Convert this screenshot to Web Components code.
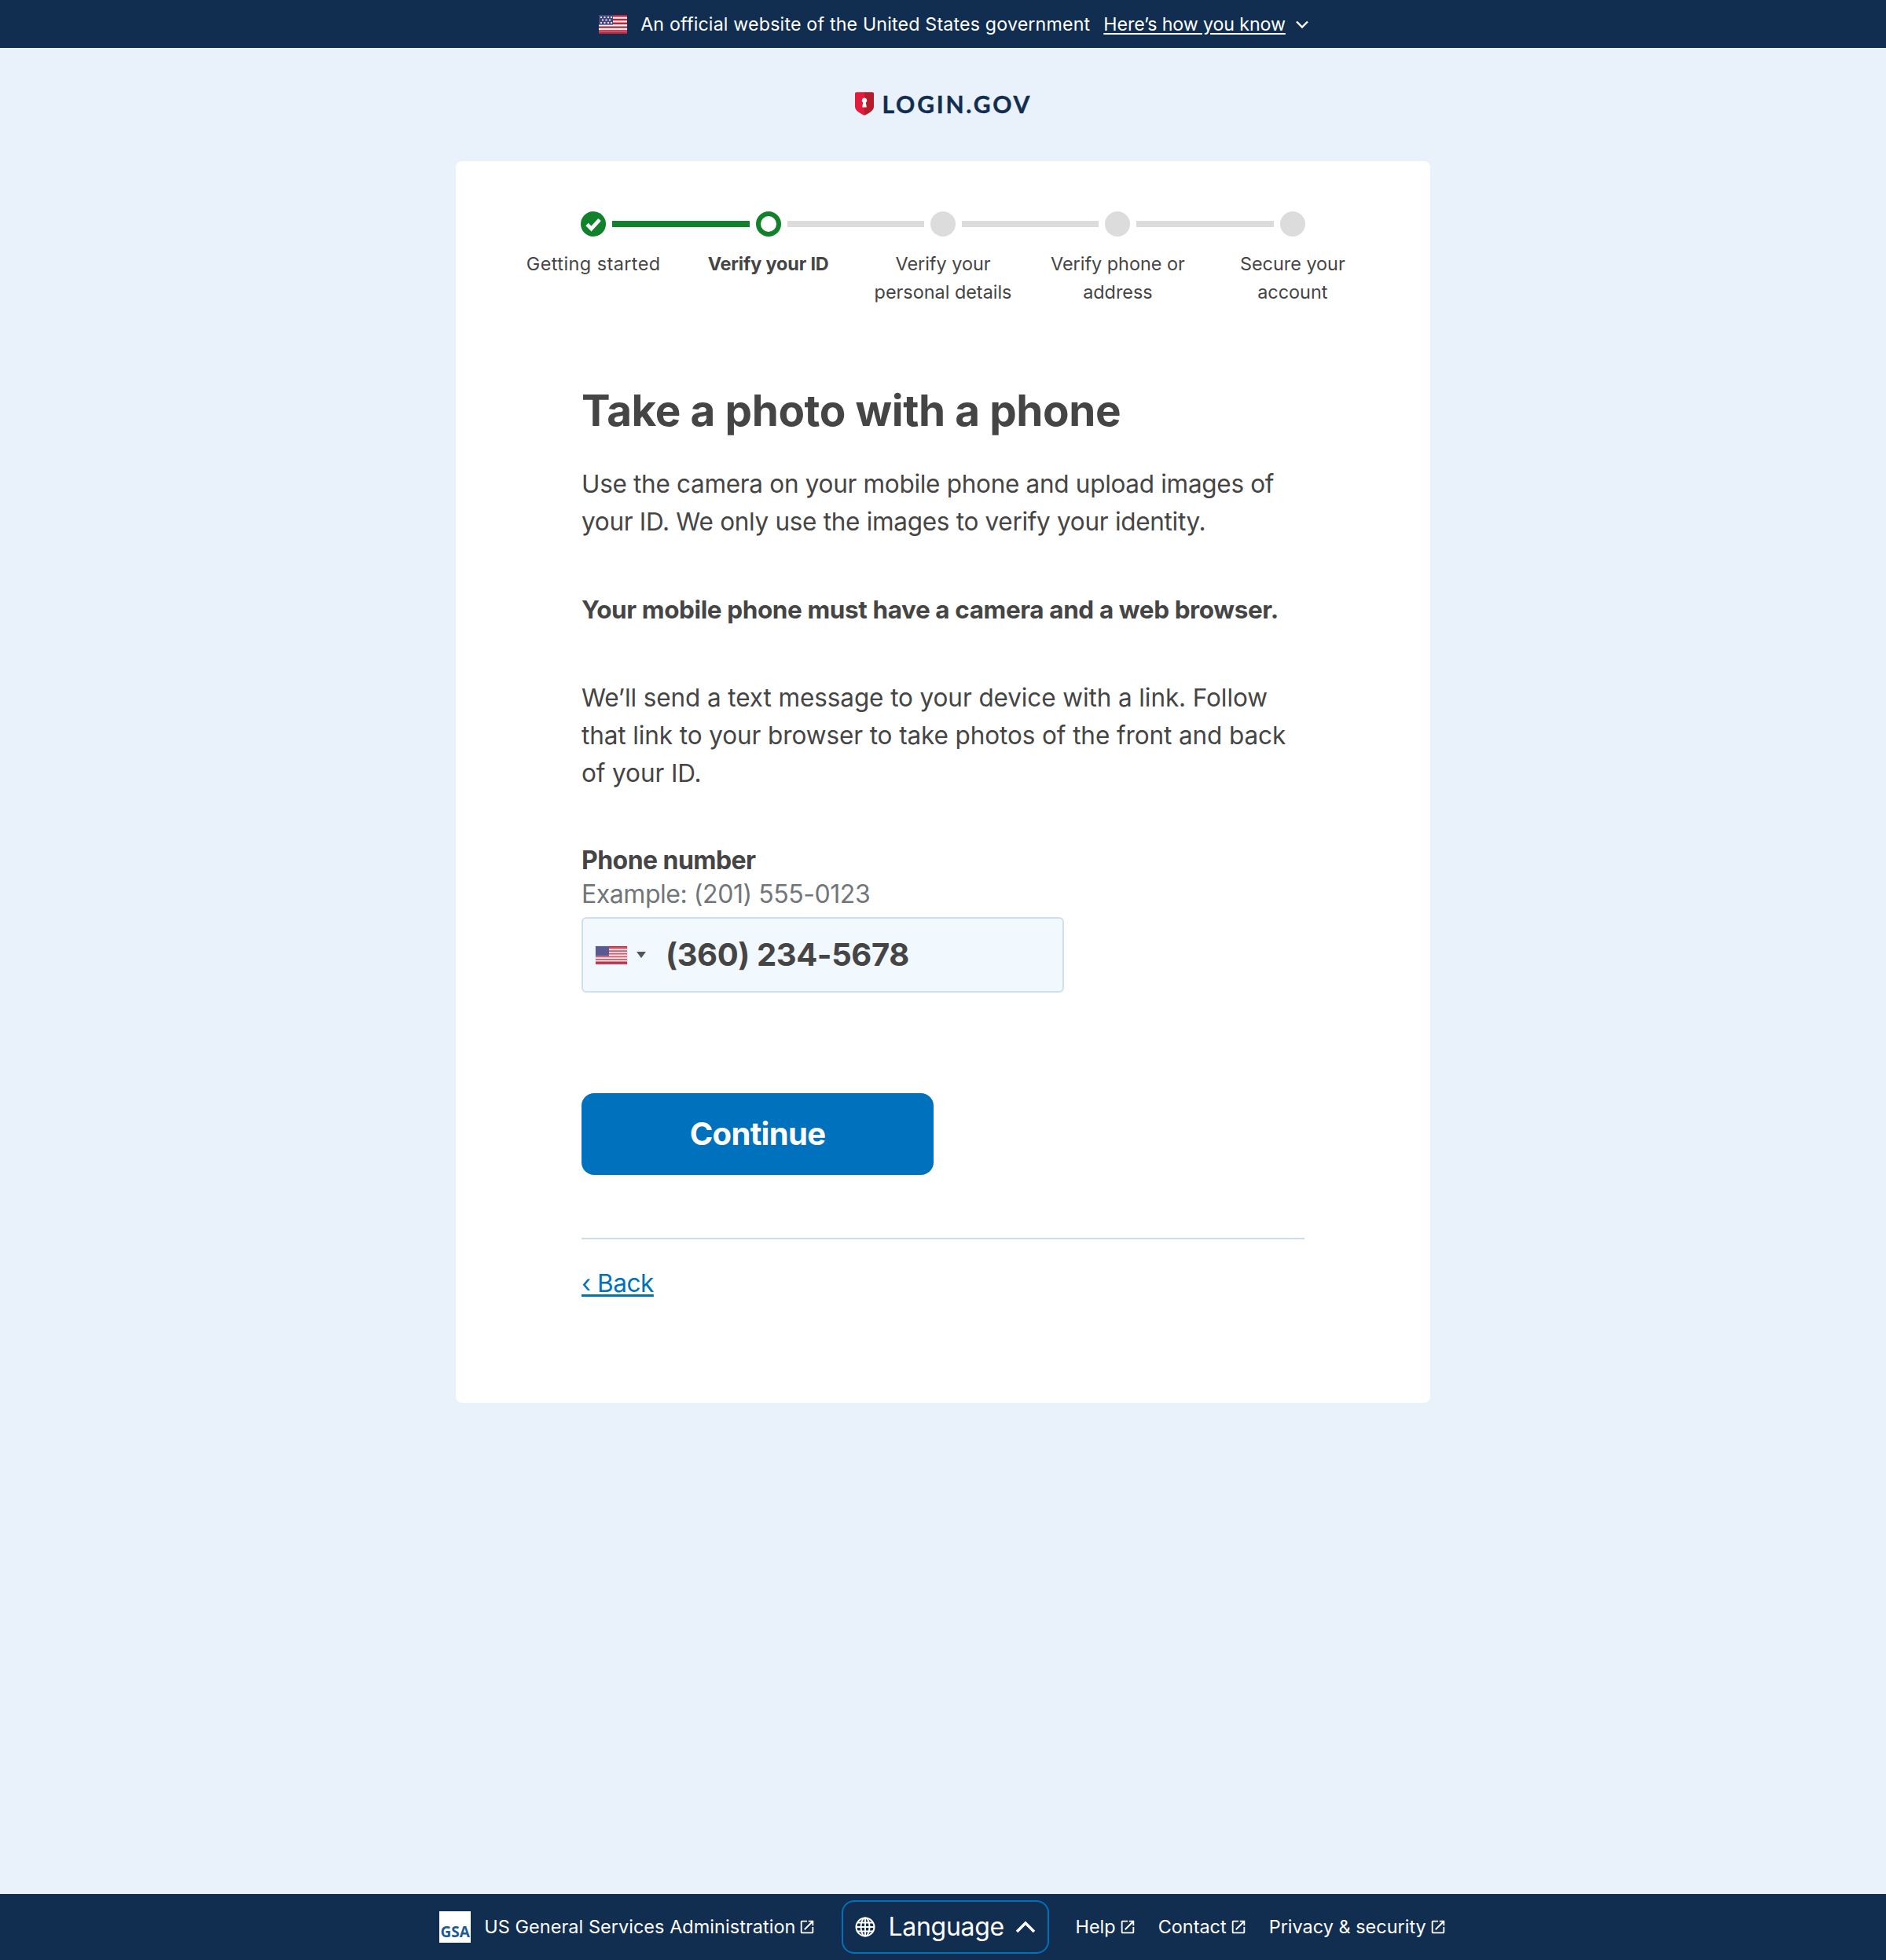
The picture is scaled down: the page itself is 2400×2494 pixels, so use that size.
<!DOCTYPE html>
<html lang="en">
<head>
<meta charset="utf-8">
<title>Login.gov</title>
<style>
  html, body { margin: 0; padding: 0; }
  body {
    min-height: 2494px;
    display: flex;
    flex-direction: column;
    background: #e9f2fa;
    color: #454545;
    font-family: Inter, "Liberation Sans", sans-serif;
  }
  .spacer { flex: 1; }
</style>
</head>
<body>
  <gov-banner></gov-banner>
  <site-logo></site-logo>
  <page-card>
    <step-indicator>
      <step-item state="done" first style="letter-spacing:.45px">Getting started</step-item>
      <step-item state="current">Verify your ID</step-item>
      <step-item>Verify your personal details</step-item>
      <step-item>Verify phone or address</step-item>
      <step-item last>Secure your account</step-item>
    </step-indicator>
    <photo-form></photo-form>
  </page-card>
  <div class="spacer"></div>
  <site-footer></site-footer>

<script>
const FLAG = `
  <svg class="flag" viewBox="0 0 36 24" preserveAspectRatio="none" aria-hidden="true">
    <rect width="36" height="24" fill="#f4f4f4"/>
    <path fill="#c0233c" d="M0 0h36v2.4H0zM0 4.8h36v2.4H0zM0 9.6h36v2.4H0zM0 14.4h36v2.4H0zM0 19.2h36v2.4H0z"/>
    <path fill="#c0233c" d="M0 21.8h36V24H0z"/>
    <rect width="18" height="12.6" fill="#46467f"/>
    <path fill="#dfe1ea" d="M2 2h2v2H2zM6.500 2h2v2h-2zM11 2h2v2h-2zM15 2h2v2h-2zM4 5.500h2v2H4zM8.500 5.500h2v2h-2zM13 5.500h2v2h-2zM2 9h2v2H2zM6.500 9h2v2h-2zM11 9h2v2h-2zM15 9h2v2h-2z"/>
  </svg>`;

// the flag in the phone field is finer: 13 pale stripes, no visible stars
const FIELD_FLAG = `
  <svg class="flag" viewBox="0 0 40 23" preserveAspectRatio="none" aria-hidden="true">
    <rect width="40" height="23" fill="#f6e9ea"/>
    <path fill="#cf5a6b" d="M0 1.800h40v1.800H0zM0 5.300h40v1.800H0zM0 8.800h40v1.800H0zM0 12.400h40v1.800H0zM0 15.900h40v1.800H0z"/>
    <path fill="#bb2a40" d="M0 0h40v1.800H0zM0 19.400h40v1.800H0zM0 21.600h40V23H0z"/>
    <rect width="17" height="12.400" fill="#5a5a90"/>
  </svg>`;

const LAUNCH = `<path d="M19 19H5V5h7V3H5a2 2 0 0 0-2 2v14a2 2 0 0 0 2 2h14c1.100 0 2-.9 2-2v-7h-2v7zM14 3v2h3.590l-9.830 9.830 1.410 1.410L19 6.410V10h2V3h-7z"/>`;

class GovBanner extends HTMLElement {
  constructor() {
    super();
    this.attachShadow({mode: 'open'}).innerHTML = `
      <style>
        :host {
          display: flex;
          justify-content: center;
          align-items: center;
          height: 61px;
          padding-left: 28px;
          background: #112e51;
          color: #fff;
          font: 400 23.2px/32px Inter, "Liberation Sans", sans-serif;
          letter-spacing: -.1px;
        }
        .flag { width: 36px; height: 24px; margin-right: 17px; display: block; }
        .txt { letter-spacing: .18px; }
        a { color: #fff; margin-left: 17px; text-decoration: underline; text-underline-offset: 3px; }
        svg.chev { width: 18px; height: 12px; margin-left: 12px; }
      </style>
      ${FLAG}
      <span class="txt">An official website of the United States government</span>
      <a href="#">Here’s how you know</a>
      <svg class="chev" viewBox="0 0 18 12"><path d="M2 2.500l7 7 7-7" fill="none" stroke="#fff" stroke-width="2.400"/></svg>
    `;
  }
}

class SiteLogo extends HTMLElement {
  constructor() {
    super();
    this.attachShadow({mode: 'open'}).innerHTML = `
      <style>
        :host {
          display: flex;
          justify-content: center;
          align-items: center;
          box-sizing: border-box;
          height: 144px;
          padding-bottom: 3px;
          color: #112e51;
          font: 700 30px/40px Lato, "Liberation Sans", sans-serif;
          letter-spacing: 2.800px;
          -webkit-text-stroke: .4px #112e51;
        }
        svg { width: 24px; height: 30px; margin-right: 11px; }
        span { width: 190px; white-space: nowrap; }
      </style>
      <svg viewBox="0 0 26 32" aria-hidden="true">
        <path fill="#e21c3d" d="M2 0h11v32C6 29 0 25 0 20V2a2 2 0 0 1 2-2z"/>
        <path fill="#b51d2c" d="M13 0h11a2 2 0 0 1 2 2v18c0 5-6 9-13 12z"/>
        <path fill="#fff" d="M13 8a3.500 3.500 0 0 1 2 6.400l1 6.600h-6l1-6.600A3.500 3.500 0 0 1 13 8z"/>
      </svg>
      <span>LOGIN.GOV</span>
    `;
  }
}

class PageCard extends HTMLElement {
  constructor() {
    super();
    this.attachShadow({mode: 'open'}).innerHTML = `
      <style>
        :host {
          display: block;
          box-sizing: border-box;
          width: 1240px;
          height: 1580px;
          margin: 0 auto;
          padding: 64px 64px 0;
          background: #fff;
          border-radius: 8px;
        }
      </style>
      <slot></slot>
    `;
  }
}

class StepIndicator extends HTMLElement {
  constructor() {
    super();
    this.attachShadow({mode: 'open'}).innerHTML = `
      <style>
        :host { display: flex; height: 168px; }
      </style>
      <slot></slot>
    `;
  }
}

class StepItem extends HTMLElement {
  connectedCallback() {
    if (this.shadowRoot) return;
    const state = this.getAttribute('state');
    const done = state === 'done';
    const cur = state === 'current';
    const green = '#12812b', grey = '#dcdcdc';
    const before = this.hasAttribute('first') ? 'transparent' : (done || cur ? green : grey);
    const after = this.hasAttribute('last') ? 'transparent' : (done ? green : grey);
    this.attachShadow({mode: 'open'}).innerHTML = `
      <style>
        :host {
          flex: 1 1 0;
          display: block;
          text-align: center;
          font: ${cur ? 700 : 400} 23.400px/36px Inter, "Liberation Sans", sans-serif;
          letter-spacing: ${cur ? '-.15px' : '0'};
          color: #454545;
        }
        .track { display: flex; align-items: center; height: 32px; margin-bottom: 17px; }
        .line { flex: 1; height: 8px; }
        .dot { width: 32px; height: 32px; margin: 0 8px; box-sizing: border-box; border-radius: 50%; background: ${grey}; flex: none; }
        .dot.current { background: #fff; border: 6px solid ${green}; }
        .dot.done { background: ${green}; }
        .dot svg { display: block; }
        .label { padding: 0 20px; }
      </style>
      <div class="track">
        <div class="line" style="background:${before}"></div>
        <div class="dot ${state || ''}">
          ${done ? '<svg viewBox="0 0 32 32"><path d="M8 16.500l5.500 5.500 10.500-11.500" fill="none" stroke="#fff" stroke-width="4.800"/></svg>' : ''}
        </div>
        <div class="line" style="background:${after}"></div>
      </div>
      <div class="label"><slot></slot></div>
    `;
  }
}

class PhoneInput extends HTMLElement {
  constructor() {
    super();
    this.attachShadow({mode: 'open'}).innerHTML = `
      <style>
        :host { display: block; }
        label { display: block; font-weight: 700; font-size: 32px; line-height: 44px; letter-spacing: -.55px; color: #454545; }
        .hint { display: block; font-size: 32px; line-height: 42px; color: #71767a; letter-spacing: -.45px; }
        .box {
          box-sizing: border-box;
          display: flex;
          align-items: center;
          width: 614px;
          height: 96px;
          margin-top: 8px;
          padding-left: 16px;
          background: #f1f8fe;
          border: 2px solid #cddff0;
          border-radius: 6px;
        }
        .flag { width: 40px; height: 23px; display: block; box-shadow: 0 0 1px rgba(0, 0, 0, .35); }
        .caret { width: 0; height: 0; margin: 0 25px 0 12px; border: 6px solid transparent; border-top: 8px solid #555; border-bottom: 0; }
        .value { font: 700 40px/1 Inter, "Liberation Sans", sans-serif; color: #454545; letter-spacing: -.4px; }
      </style>
      <label>Phone number</label>
      <span class="hint">Example: (201) 555-0123</span>
      <div class="box">
        ${FIELD_FLAG}
        <span class="caret"></span>
        <span class="value">(360) 234-5678</span>
      </div>
    `;
  }
}

class PrimaryButton extends HTMLElement {
  constructor() {
    super();
    this.attachShadow({mode: 'open'}).innerHTML = `
      <style>
        :host {
          display: flex;
          align-items: center;
          justify-content: center;
          width: 448px;
          height: 104px;
          background: #0071bc;
          border-radius: 16px;
          color: #fff;
          font: 700 40px/1 Inter, "Liberation Sans", sans-serif;
          letter-spacing: -.7px;
        }
      </style>
      <slot></slot>
    `;
  }
}

class PhotoForm extends HTMLElement {
  constructor() {
    super();
    this.attachShadow({mode: 'open'}).innerHTML = `
      <style>
        :host {
          display: block;
          box-sizing: border-box;
          padding: 0 96px;
          font: 400 31.500px/48px Inter, "Liberation Sans", sans-serif;
          letter-spacing: -.3px;
          color: #454545;
        }
        h1 { margin: 53px 0 38px; font: 700 54.800px/64px Inter, "Liberation Sans", sans-serif; letter-spacing: -.4px; }
        p { margin: 0 0 64px; }
        p.b { font-weight: 700; letter-spacing: -.4px; margin-bottom: 64px; }
        p.last { margin-bottom: 65px; letter-spacing: -.1px; }
        primary-button { margin-top: 128px; }
        hr { height: 2px; border: 0; margin: 80px 0 0; background: #c9dcf0; }
        a { display: inline-block; margin-top: 32px; color: #0071bc; text-decoration: underline; text-decoration-thickness: 3px; text-underline-offset: 3px; letter-spacing: -.45px; }
      </style>
      <h1>Take a photo with a phone</h1>
      <p>Use the camera on your mobile phone and upload images of your ID. We only use the images to verify your identity.</p>
      <p class="b">Your mobile phone must have a camera and a web browser.</p>
      <p class="last">We’ll send a text message to your device with a link. Follow that link to your browser to take photos of the front and back<br>of your ID.</p>
      <phone-input></phone-input>
      <primary-button>Continue</primary-button>
      <hr>
      <a href="#">‹ Back</a>
    `;
  }
}

class ExtLink extends HTMLElement {
  constructor() {
    super();
    this.attachShadow({mode: 'open'}).innerHTML = `
      <style>
        :host { display: inline-flex; align-items: center; color: #fff; white-space: nowrap; }
        svg { width: 22px; height: 22px; margin-left: 4px; fill: #fff; }
      </style>
      <slot></slot>
      <svg viewBox="0 0 24 24" aria-hidden="true">${LAUNCH}</svg>
    `;
  }
}

class SiteFooter extends HTMLElement {
  constructor() {
    super();
    this.attachShadow({mode: 'open'}).innerHTML = `
      <style>
        :host {
          display: flex;
          align-items: center;
          justify-content: center;
          height: 84px;
          background: #112e51;
          color: #fff;
          font: 400 23.400px/32px Inter, "Liberation Sans", sans-serif;
          letter-spacing: .03px;
        }
        .gsa {
          box-sizing: border-box;
          width: 40px;
          height: 40px;
          margin-right: 17px;
          background: #fff;
          color: #1b5a96;
          font: 700 19px/1 "Open Sans", sans-serif;
          letter-spacing: 0;
          display: flex;
          align-items: flex-end;
          justify-content: center;
          padding-bottom: 4px;
        }
        .wide { letter-spacing: .08px; }
        .lang {
          box-sizing: border-box;
          display: flex;
          align-items: center;
          width: 264px;
          height: 68px;
          margin: 0 33px;
          padding-left: 15px;
          border: 2px solid #0071bc;
          border-radius: 16px;
          font-size: 32px;
          letter-spacing: -.3px;
        }
        .lang svg.globe { width: 26px; height: 26px; margin-right: 16px; }
        .lang svg.up { width: 28px; height: 18px; margin-left: 13px; }
        .lang + ext-link, .lang + ext-link + ext-link { margin-right: 28px; }
      </style>
      <span class="gsa">GSA</span>
      <ext-link class="wide">US General Services Administration</ext-link>
      <div class="lang">
        <svg class="globe" viewBox="0 0 26 26" fill="none" stroke="#fff" stroke-width="2">
          <circle cx="13" cy="13" r="11.500"/>
          <ellipse cx="13" cy="13" rx="5.500" ry="11.500"/>
          <path d="M13 1.500v23M1.500 13h23M3 7.500h20M3 18.500h20"/>
        </svg>
        <span>Language</span>
        <svg class="up" viewBox="0 0 28 18"><path d="M3 15L14 4l11 11" fill="none" stroke="#fff" stroke-width="3.500"/></svg>
      </div>
      <ext-link>Help</ext-link>
      <ext-link>Contact</ext-link>
      <ext-link>Privacy &amp; security</ext-link>
    `;
  }
}

customElements.define('gov-banner', GovBanner);
customElements.define('site-logo', SiteLogo);
customElements.define('page-card', PageCard);
customElements.define('step-indicator', StepIndicator);
customElements.define('step-item', StepItem);
customElements.define('phone-input', PhoneInput);
customElements.define('primary-button', PrimaryButton);
customElements.define('photo-form', PhotoForm);
customElements.define('ext-link', ExtLink);
customElements.define('site-footer', SiteFooter);
</script>
</body>
</html>
